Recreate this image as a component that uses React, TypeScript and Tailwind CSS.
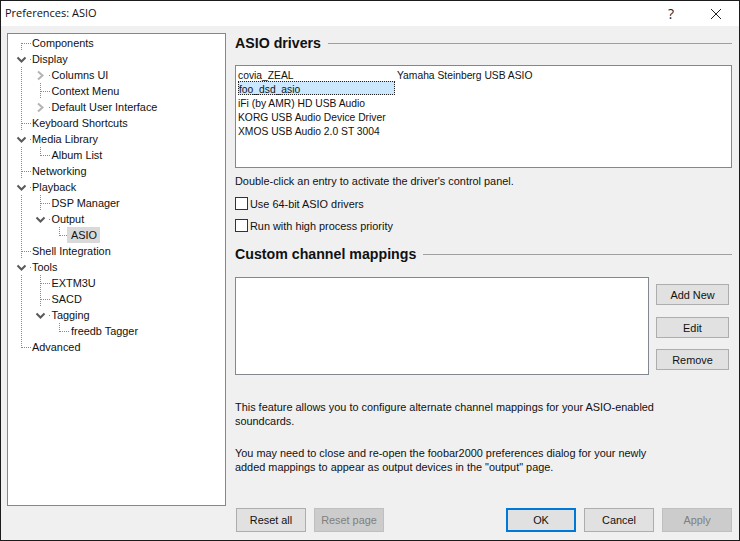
import React from "react";

type Node = { t: string; d: number; k?: "open" | "closed"; sel?: boolean; v: number[]; last?: boolean; first?: boolean };

const COL = [13, 32, 51];
const TEXT_X = [24, 43.5, 63];

const nodes: Node[] = [
  { t: "Components", d: 0, v: [], first: true },
  { t: "Display", d: 0, k: "open", v: [] },
  { t: "Columns UI", d: 1, k: "closed", v: [0] },
  { t: "Context Menu", d: 1, v: [0] },
  { t: "Default User Interface", d: 1, k: "closed", v: [0] },
  { t: "Keyboard Shortcuts", d: 0, v: [] },
  { t: "Media Library", d: 0, k: "open", v: [] },
  { t: "Album List", d: 1, v: [0], last: true },
  { t: "Networking", d: 0, v: [] },
  { t: "Playback", d: 0, k: "open", v: [] },
  { t: "DSP Manager", d: 1, v: [0] },
  { t: "Output", d: 1, k: "open", v: [0] },
  { t: "ASIO", d: 2, v: [0], last: true, sel: true },
  { t: "Shell Integration", d: 0, v: [] },
  { t: "Tools", d: 0, k: "open", v: [] },
  { t: "EXTM3U", d: 1, v: [0] },
  { t: "SACD", d: 1, v: [0] },
  { t: "Tagging", d: 1, k: "open", v: [0] },
  { t: "freedb Tagger", d: 2, v: [0], last: true },
  { t: "Advanced", d: 0, v: [], last: true },
];

function Row({ n }: { n: Node }) {
  const x = COL[n.d];
  const w = TEXT_X[n.d];
  const dash = "1 1";
  const stroke = "#8a8a8a";
  return (
    <div className="flex h-4 items-center">
      <svg width={w} height={16} className="shrink-0" shapeRendering="crispEdges">
        {n.v.map((c) => (
          <line key={c} x1={COL[c] + 0.5} x2={COL[c] + 0.5} y1={0} y2={16} stroke={stroke} strokeDasharray={dash} />
        ))}
        {n.k ? (
          <g>
            <line x1={x + 9} x2={x + 10} y1={8.5} y2={8.5} stroke={stroke} strokeDasharray={dash} />
            {n.k === "open" ? (
              <path d={`M${x - 3.5} 6.5 L${x + 0.5} 10.5 L${x + 4.5} 6.5`} fill="none" stroke="#595959" strokeWidth={2} shapeRendering="geometricPrecision" />
            ) : (
              <path d={`M${x - 2} 4.5 L${x + 2.5} 8.5 L${x - 2} 12.5`} fill="none" stroke="#b4b4b4" strokeWidth={2} shapeRendering="geometricPrecision" />
            )}
          </g>
        ) : (
          <g>
            <line x1={x + 0.5} x2={x + 0.5} y1={n.first ? 8 : 0} y2={n.last ? 9 : 16} stroke={stroke} strokeDasharray={dash} />
            <line x1={x + 1} x2={x + 10} y1={8.5} y2={8.5} stroke={stroke} strokeDasharray={dash} />
          </g>
        )}
      </svg>
      <span className={n.sel ? "-ml-1 w-[33px] bg-[#d9d9d9] px-1 leading-4 text-[#111]" : "leading-4 text-[#111]"}>{n.t}</span>
    </div>
  );
}

function Heading({ children, className = "" }: { children: React.ReactNode; className?: string }) {
  return (
    <div className={`flex items-center gap-[7px] ${className}`}>
      <span className="whitespace-nowrap text-[14.2px] font-bold leading-5 text-[#111]">{children}</span>
      <span className="h-px flex-1 bg-[#a0a0a0]" />
    </div>
  );
}

function Check({ label, className = "" }: { label: string; className?: string }) {
  return (
    <label className={`flex h-[13px] items-center gap-[2px] ${className}`}>
      <span className="h-[13px] w-[13px] shrink-0 border border-[#333] bg-white" />
      <span className="leading-4 text-[#111]">{label}</span>
    </label>
  );
}

function Btn({ label, kind = "normal", className = "" }: { label: string; kind?: "normal" | "off" | "def"; className?: string }) {
  const s =
    kind === "off"
      ? "border border-[#bfbfbf] bg-[#cccccc] text-[#7f7f7f]"
      : kind === "def"
        ? "border-2 border-[#0078d7] bg-[#e1e1e1] text-[#111]"
        : "border border-[#adadad] bg-[#e1e1e1] text-[#111]";
  return <button className={`flex items-center justify-center ${s} ${className}`}>{label}</button>;
}

const drivers = ["covia_ZEAL", "foo_dsd_asio", "iFi (by AMR) HD USB Audio", "KORG USB Audio Device Driver", "XMOS USB Audio 2.0 ST 3004"];

export default function App() {
  return (
    <div className="flex h-[541px] w-[740px] flex-col overflow-hidden border border-[#1c1c1c] bg-[#f0f0f0] font-['Liberation_Sans',sans-serif] text-[10.9px]">
      <div className="flex h-[25px] shrink-0 items-center justify-between bg-white pl-1">
        <span className="font-['Open_Sans',sans-serif] text-[11px] text-[#111]">Preferences: ASIO</span>
        <div className="flex items-center">
          <span className="mr-[36px] font-['Open_Sans',sans-serif] text-sm text-[#222]">?</span>
          <svg width="12" height="12" viewBox="0 0 12 12" className="mr-[17px]">
            <path d="M1 1L11 11M11 1L1 11" stroke="#222" strokeWidth="1" fill="none" />
          </svg>
        </div>
      </div>
      <div className="flex flex-1 pl-[6px] pt-[7px]">
        <div className="h-[473px] w-[219px] shrink-0 border border-[#828790] bg-white pt-px">
          {nodes.map((n) => (
            <Row key={n.t} n={n} />
          ))}
        </div>
        <div className="ml-[9px] flex w-[497px] flex-col">
          <Heading>ASIO drivers</Heading>
          <div className="mt-[12px] flex h-[103px] border border-[#828790] bg-white pl-[2px] pt-[3px] text-[10.3px]">
            <div className="w-[159px]">
              {drivers.map((d, i) => (
                <div
                  key={d}
                  className={
                    i === 1
                      ? "-mt-[2px] mb-[2px] h-[14px] w-[157px] whitespace-nowrap border border-dotted border-[#222] bg-[#cce8ff] leading-[16px] text-[#111]"
                      : "h-[14px] whitespace-nowrap leading-[14px] text-[#111]"
                  }
                >
                  {d}
                </div>
              ))}
            </div>
            <div className="h-[14px] leading-[14px] text-[#111]">Yamaha Steinberg USB ASIO</div>
          </div>
          <p className="mt-[5px] leading-4 text-[#111]">Double-click an entry to activate the driver's control panel.</p>
          <Check label="Use 64-bit ASIO drivers" className="mt-[8px]" />
          <Check label="Run with high process priority" className="mt-[9px]" />
          <Heading className="mt-[12px]">Custom channel mappings</Heading>
          <div className="mt-[13px] flex">
            <div className="h-[98px] w-[414px] border border-[#828790] bg-white" />
            <div className="ml-[7px] flex flex-col gap-[11px] pt-[7px]">
              <Btn label="Add New" className="h-[21px] w-[73px] pt-px" />
              <Btn label="Edit" className="mt-px h-[21px] w-[73px] pt-px" />
              <Btn label="Remove" className="h-[21px] w-[73px] pt-px" />
            </div>
          </div>
          <p className="mt-[25px] leading-[14px] text-[#111]">
            This feature allows you to configure alternate channel mappings for your ASIO-enabled
            <br />
            soundcards.
          </p>
          <p className="mt-[18px] leading-[14px] text-[#111]">
            You may need to close and re-open the foobar2000 preferences dialog for your newly
            <br />
            added mappings to appear as output devices in the "output" page.
          </p>
          <div className="mt-auto mb-[8px] flex pl-px">
            <Btn label="Reset all" className="h-6 w-[70px]" />
            <Btn label="Reset page" kind="off" className="ml-2 h-6 w-[70px]" />
            <Btn label="OK" kind="def" className="ml-[122px] h-6 w-[70px]" />
            <Btn label="Cancel" className="ml-2 h-6 w-[70px]" />
            <Btn label="Apply" kind="off" className="ml-2 h-6 w-[70px]" />
          </div>
        </div>
      </div>
    </div>
  );
}
